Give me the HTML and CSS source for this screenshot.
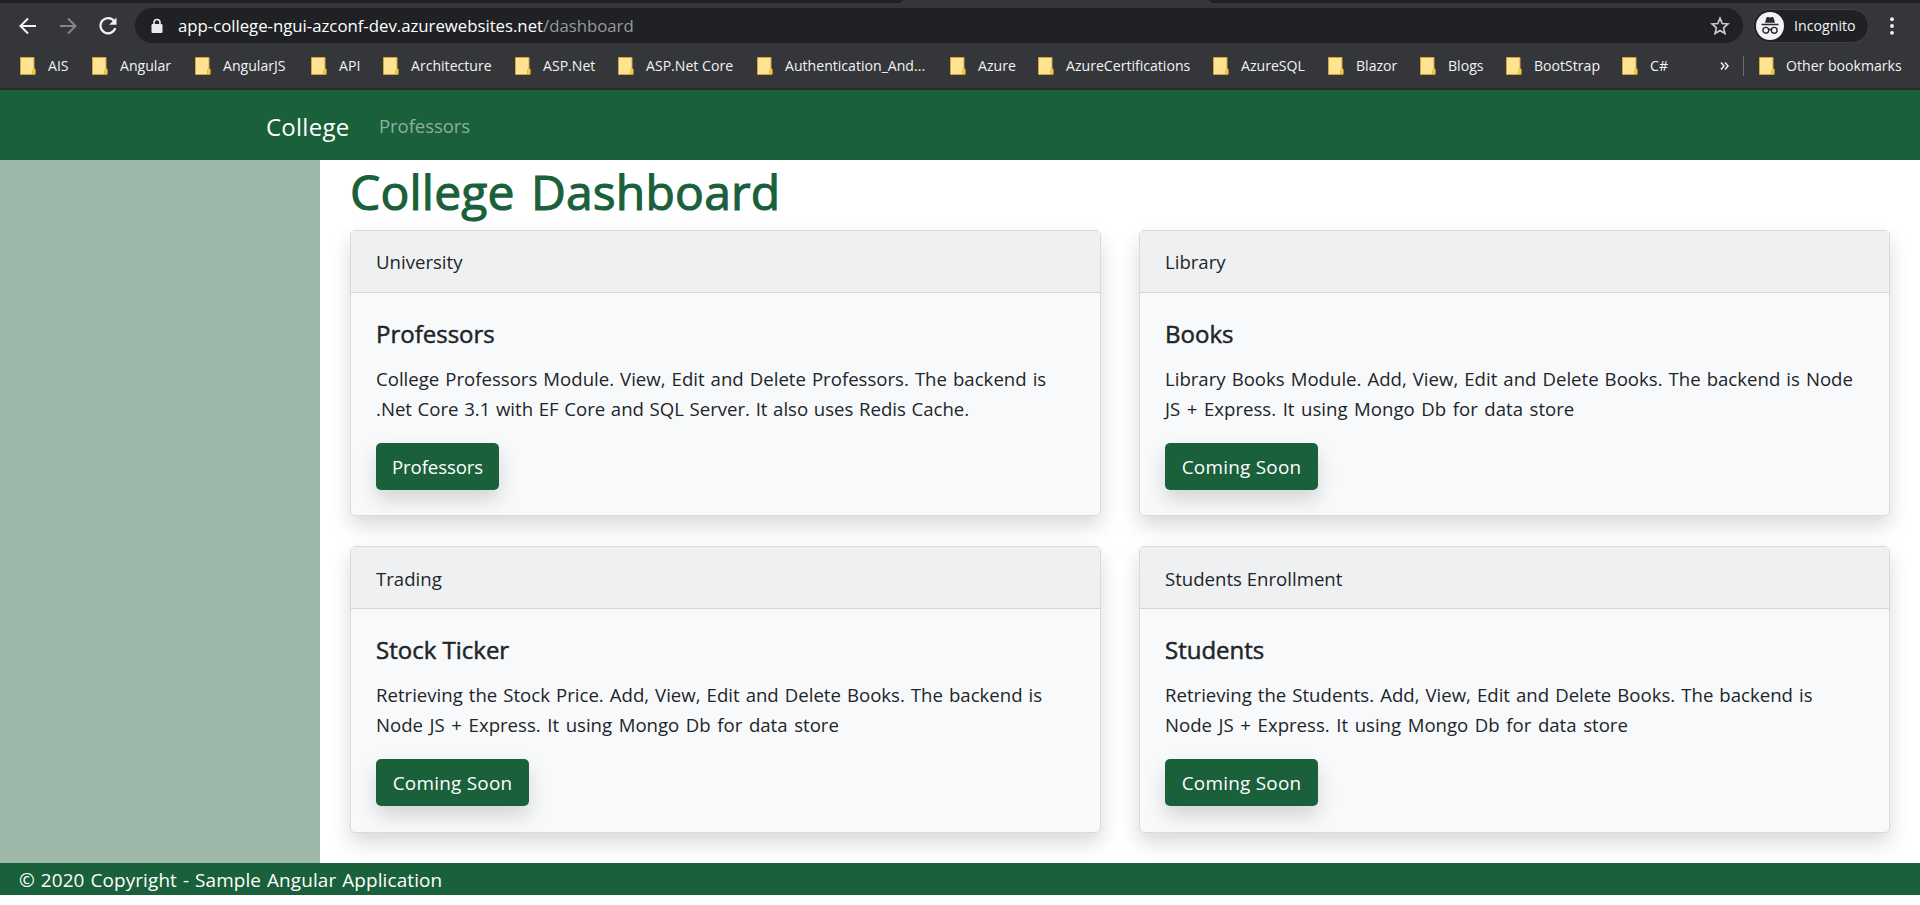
FILE: index.html
```html
<!DOCTYPE html>
<html lang="en">
<head>
<meta charset="utf-8">
<title>College Dashboard</title>
<link rel="stylesheet" href="styles.css">
</head>
<body>
<svg class="defs" width="0" height="0">
  <symbol id="folder" viewBox="0 0 16 18">
    <path d="M.5.5h13.500v11.500h1v5.500H.5z" fill="#ffe391" stroke="#d0a63c"/>
    <path d="M12.500 17v-3.500q0-1.500 2.500-1.500v5z" fill="#f7d55c" stroke="#d9ac2c" stroke-width=".8"/>
  </symbol>
</svg>
<header class="browser">
  <div class="tabstrip"><div class="active-tab"></div></div>
  <div class="toolbar">
    <svg class="nav-icon back" viewBox="0 0 20 20"><path d="M18 10H3M10 2.500 2.500 10l7.500 7.500" fill="none" stroke="#f1f3f4" stroke-width="2"/></svg>
    <svg class="nav-icon forward" viewBox="0 0 20 20"><path d="M2 10h15M10 2.500l7.500 7.500-7.500 7.500" fill="none" stroke="#85868a" stroke-width="2"/></svg>
    <svg class="nav-icon reload" viewBox="0 0 20 20"><path d="M16.300 5.300A7.600 7.600 0 1 0 17.300 12.200" fill="none" stroke="#f1f3f4" stroke-width="2.200"/><path d="M18.500 1.500v7.300h-7.300z" fill="#f1f3f4"/></svg>
    <div class="omnibox">
      <svg class="lock" viewBox="0 0 12 16"><path d="M3 7V4.500a3 3 0 0 1 6 0V7" fill="none" stroke="#e8eaed" stroke-width="1.600"/><rect x=".5" y="6" width="11" height="9" rx="1.200" fill="#e8eaed"/></svg>
      <div class="url">app-college-ngui-azconf-dev.azurewebsites.net<span>/dashboard</span></div>
      <svg class="star" viewBox="0 0 20 20"><path d="M10 2.200l2.200 5.300 5.700.5-4.300 3.800 1.300 5.700-4.900-3-4.900 3 1.300-5.700L2.100 8l5.700-.5z" fill="none" stroke="#c6c8cb" stroke-width="1.700"/></svg>
    </div>
    <div class="incognito">
      <svg viewBox="0 0 28 28"><circle cx="14" cy="14" r="14" fill="#f1f3f4"/><path d="M9 10.800 10.500 5.600q.4-1 1.400-.6l2.100.6 2.100-.6q1-.4 1.400.6L19 10.800zM5.500 11.800h17v1.500h-17z" fill="#292a2d"/><g fill="none" stroke="#292a2d" stroke-width="1.400"><circle cx="9.800" cy="18.300" r="2.900"/><circle cx="18.200" cy="18.300" r="2.900"/><path d="M12.700 17.700q1.300-.8 2.600 0"/></g></svg>
      <span>Incognito</span>
    </div>
    <svg class="menu" viewBox="0 0 4 18"><g fill="#f1f3f4"><circle cx="2" cy="2.200" r="1.900"/><circle cx="2" cy="9" r="1.900"/><circle cx="2" cy="15.800" r="1.900"/></g></svg>
  </div>
  <div class="bookmarks">
    <div class="bm"><svg><use href="#folder"/></svg>AIS</div>
    <div class="bm"><svg><use href="#folder"/></svg>Angular</div>
    <div class="bm"><svg><use href="#folder"/></svg>AngularJS</div>
    <div class="bm"><svg><use href="#folder"/></svg>API</div>
    <div class="bm"><svg><use href="#folder"/></svg>Architecture</div>
    <div class="bm"><svg><use href="#folder"/></svg>ASP.Net</div>
    <div class="bm"><svg><use href="#folder"/></svg>ASP.Net Core</div>
    <div class="bm"><svg><use href="#folder"/></svg>Authentication_And...</div>
    <div class="bm"><svg><use href="#folder"/></svg>Azure</div>
    <div class="bm"><svg><use href="#folder"/></svg>AzureCertifications</div>
    <div class="bm"><svg><use href="#folder"/></svg>AzureSQL</div>
    <div class="bm"><svg><use href="#folder"/></svg>Blazor</div>
    <div class="bm"><svg><use href="#folder"/></svg>Blogs</div>
    <div class="bm"><svg><use href="#folder"/></svg>BootStrap</div>
    <div class="bm"><svg><use href="#folder"/></svg>C#</div>
    <svg class="more" viewBox="0 0 9 8"><path d="M1 .5 4 4 1 7.500M5 .5 8 4 5 7.500" fill="none" stroke="#f1f3f4" stroke-width="1.500"/></svg>
    <div class="bm other"><svg><use href="#folder"/></svg>Other bookmarks</div>
  </div>
</header>
<nav class="navbar">
  <a class="brand">College</a>
  <a class="nav-link">Professors</a>
</nav>
<div class="layout">
  <aside class="sidebar"></aside>
  <main class="content">
    <h1>College Dashboard</h1>
    <div class="cards">
      <section class="card">
        <div class="card-header">University</div>
        <div class="card-body">
          <h2>Professors</h2>
          <p>College Professors Module. View, Edit and Delete Professors. The backend is<br><span class="runtime">.Net Core 3.1 with EF Core and SQL Server. It also uses Redis Cache.</span></p>
          <a class="btn btn-short">Professors</a>
        </div>
      </section>
      <section class="card">
        <div class="card-header">Library</div>
        <div class="card-body">
          <h2>Books</h2>
          <p>Library Books Module. Add, View, Edit and Delete Books. The backend is Node<br><span class="stack">JS + Express. It using Mongo Db for data store</span></p>
          <a class="btn">Coming Soon</a>
        </div>
      </section>
      <section class="card">
        <div class="card-header">Trading</div>
        <div class="card-body">
          <h2>Stock Ticker</h2>
          <p>Retrieving the Stock Price. Add, View, Edit and Delete Books. The backend is<br><span class="stack">Node JS + Express. It using Mongo Db for data store</span></p>
          <a class="btn">Coming Soon</a>
        </div>
      </section>
      <section class="card">
        <div class="card-header">Students Enrollment</div>
        <div class="card-body">
          <h2>Students</h2>
          <p>Retrieving the Students. Add, View, Edit and Delete Books. The backend is<br><span class="stack">Node JS + Express. It using Mongo Db for data store</span></p>
          <a class="btn">Coming Soon</a>
        </div>
      </section>
    </div>
  </main>
</div>
<footer class="footer">© 2020 Copyright - Sample Angular Application</footer>
</body>
</html>
```
FILE: styles.css
```css
* { box-sizing: border-box; }
body {
  margin: 0;
  height: 905px;
  overflow: hidden;
  background: #fff;
  color: #212529;
  font-family: "Open Sans", "Noto Sans", sans-serif;
  font-size: 18.6px;
}
.defs { position: absolute; }
.browser {
  height: 90px;
  background: #35363a;
  border-bottom: 2px solid #292a2d;
  color: #f1f3f4;
}
.tabstrip { height: 3px; background: #202124; padding-left: 900px; }
.active-tab {
  width: 312px;
  height: 3px;
  background: #35363a;
  clip-path: polygon(3px 0, 309px 0, 100% 100%, 0 100%);
}
.toolbar { display: flex; align-items: center; height: 45px; padding-left: 18px; }
.nav-icon { width: 20px; height: 20px; flex: none; margin-right: 20px; }
.reload { margin-right: 17px; }
.omnibox {
  display: flex;
  align-items: center;
  width: 1608px;
  height: 35px;
  padding: 0 13px 0 16px;
  border-radius: 18px;
  background: #202124;
}
.lock { width: 12px; height: 16px; margin-right: 15px; }
.url { flex: 1; font-size: 16.8px; letter-spacing: -0.02px; color: #fff; white-space: nowrap; }
.url span { color: #96999d; }
.star { width: 20px; height: 20px; }
.incognito {
  display: flex;
  align-items: center;
  gap: 10px;
  width: 116px;
  height: 34px;
  margin-left: 10px;
  padding-left: 2px;
  border: 1px solid #404145;
  border-radius: 17px;
  background: #202124;
  font-size: 14.2px;
}
.incognito svg { width: 28px; height: 28px; }
.menu { width: 4px; height: 18px; margin-left: 21px; }
.bookmarks {
  display: grid;
  grid-template-columns: 72px 103px 116px 72px 132px 103px 139px 193px 88px 175px 115px 92px 86px 116px 98px 23px auto;
  align-items: center;
  height: 36px;
  padding-left: 20px;
  font-size: 14.1px;
}
.bm { display: flex; align-items: center; gap: 12px; line-height: 18px; padding-bottom: 1px; white-space: nowrap; }
.bm svg { width: 16px; height: 18px; flex: none; margin-top: 1px; }
.more { width: 9px; height: 8px; }
.other { height: 20px; gap: 11px; padding-left: 15px; border-left: 1px solid #6b6c70; }
.navbar {
  display: flex;
  align-items: center;
  height: 70px;
  padding-left: 266px;
  background: #19603b;
  color: #fff;
}
.brand { width: 113px; font-size: 24px; letter-spacing: 0.25px; padding-top: 3px; }
.nav-link { color: #8cafa0; letter-spacing: -0.1px; }
.layout { display: flex; height: 703px; }
.sidebar { width: 320px; background: #9db7a9; }
.content { flex: 1; padding: 0 30px; }
h1 {
  margin: 0;
  height: 70px;
  padding-top: 2px;
  font-size: 48px;
  font-weight: 400;
  letter-spacing: 0.2px;
  word-spacing: 3.5px;
  line-height: 60px;
  color: #19603b;
  -webkit-text-stroke: 1.1px #19603b;
}
.cards {
  display: grid;
  grid-template-columns: 751px 751px;
  grid-template-rows: 286px 287px;
  gap: 30px 38px;
}
.card {
  border: 1px solid #d8dadc;
  border-radius: 5px;
  background: #f8f9fa;
  box-shadow: 0 10px 20px rgba(0, 0, 0, 0.15);
}
.card-header {
  height: 62px;
  padding: 1px 25px 0;
  border-bottom: 1px solid #d3d5d7;
  background: #eff0f2;
  line-height: 60px;
}
.card:nth-child(n+3) .card-header { padding-top: 2px; }
.card-body { padding: 25px; }
h2 {
  margin: 0 0 15px;
  padding-top: 1px;
  height: 30px;
  font-size: 24px;
  font-weight: 400;
  line-height: 30px;
  -webkit-text-stroke: 0.5px #212529;
}
p { margin: 0 0 19px; padding-top: 1px; line-height: 30px; word-spacing: 1.2px; white-space: nowrap; }
.stack { word-spacing: 1.75px; }
.runtime { word-spacing: 0.8px; }
.btn {
  display: block;
  width: 153px;
  height: 47px;
  border-radius: 5px;
  background: #19603b;
  box-shadow: 0 10px 20px rgba(0, 0, 0, 0.15);
  color: #fff;
  font-size: 18.9px;
  letter-spacing: 0.25px;
  line-height: 48px;
  text-align: center;
}
.btn-short { width: 123px; font-size: 18.6px; letter-spacing: -0.1px; }
.footer {
  height: 32px;
  padding-left: 19px;
  background: #19603b;
  color: #fff;
  font-size: 18.9px;
  letter-spacing: 0.13px;
  word-spacing: 0.9px;
  line-height: 34px;
}
```
